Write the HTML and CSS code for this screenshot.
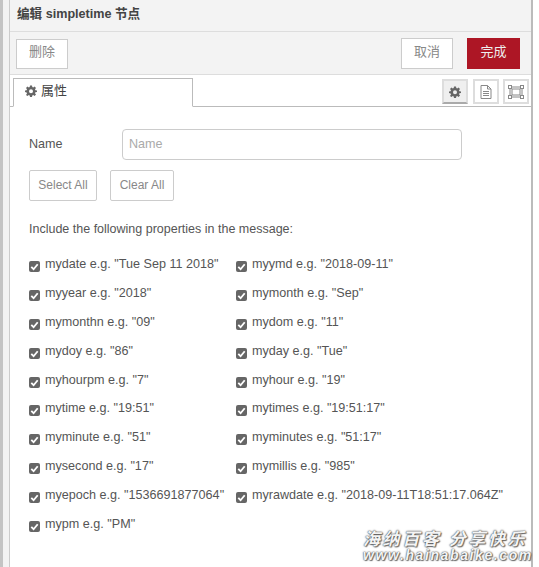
FILE: index.html
```html
<!DOCTYPE html>
<html lang="zh">
<head>
  <meta charset="UTF-8" />
  <title>编辑 simpletime 节点</title>
  <link rel="stylesheet" href="styles.css">
</head>
<body>
  <div class="side-strip"></div>
  <div class="tray">
    <div class="tray-title">编辑 simpletime 节点</div>

    <div class="tray-toolbar">
      <button class="btn btn-delete">删除</button>
      <div class="toolbar-right">
        <button class="btn btn-cancel">取消</button>
        <button class="btn btn-done">完成</button>
      </div>
    </div>

    <div class="tabs">
      <div class="tab">
        <svg class="icon-gear" viewBox="0 0 24 24"><path fill-rule="evenodd" d="M10 1h4l.6 3.2 1.800.8L19.100 3l2.900 2.900-2 2.700.8 1.800L24 11v3l-3.200.5-.8 1.800 2 2.800-2.900 2.900-2.700-2-1.800.8L14 24h-4l-.6-3.200-1.800-.8-2.700 2L2 19.800l2-2.800-.8-1.800L0 14v-3l3.200-.6.8-1.800-2-2.700L4.900 3l2.700 2 1.800-.8zM12 8.500a4 4 0 1 0 0 8 4 4 0 0 0 0-8z"/></svg>
        <span>属性</span>
      </div>
      <div class="tab-tools">
        <div class="tool tool-active">
          <svg class="icon-gear" viewBox="0 0 24 24"><path fill-rule="evenodd" d="M10 1h4l.6 3.2 1.800.8L19.100 3l2.900 2.900-2 2.700.8 1.800L24 11v3l-3.200.5-.8 1.800 2 2.800-2.900 2.900-2.700-2-1.800.8L14 24h-4l-.6-3.200-1.800-.8-2.700 2L2 19.800l2-2.800-.8-1.800L0 14v-3l3.200-.6.8-1.800-2-2.700L4.900 3l2.700 2 1.800-.8zM12 8.500a4 4 0 1 0 0 8 4 4 0 0 0 0-8z"/></svg>
        </div>
        <div class="tool">
          <svg class="icon-doc" viewBox="0 0 12 14"><path d="M1 .5h6.500L11 4v9.500H1z M7.500.5V4H11 M3 6.500h6 M3 8.500h6 M3 10.500h6"/></svg>
        </div>
        <div class="tool">
          <svg class="icon-frame" viewBox="0 0 16 14"><path d="M2 2h12v10H2z M4 4h8v6H4z"/><rect x="0.500" y="0.500" width="3" height="3"/><rect x="12.500" y="0.500" width="3" height="3"/><rect x="0.500" y="10.500" width="3" height="3"/><rect x="12.500" y="10.500" width="3" height="3"/></svg>
        </div>
      </div>
    </div>

    <div class="form">
      <div class="form-row">
        <label class="name-label">Name</label>
        <input class="name-input" type="text" placeholder="Name">
      </div>
      <div class="select-row">
        <button class="btn-plain btn-select">Select All</button>
        <button class="btn-plain btn-clear">Clear All</button>
      </div>
      <div class="include-text">Include the following properties in the message:</div>

      <div class="props" id="props"></div>
    </div>
  </div>

  <div class="watermark">
    <div class="wm-cn">海纳百客 分享快乐</div>
    <div class="wm-en">www.hainabaike.com</div>
  </div>

  <script>
    const props = [
      ['mydate e.g. "Tue Sep 11 2018"', 'myymd e.g. "2018-09-11"'],
      ['myyear e.g. "2018"', 'mymonth e.g. "Sep"'],
      ['mymonthn e.g. "09"', 'mydom e.g. "11"'],
      ['mydoy e.g. "86"', 'myday e.g. "Tue"'],
      ['myhourpm e.g. "7"', 'myhour e.g. "19"'],
      ['mytime e.g. "19:51"', 'mytimes e.g. "19:51:17"'],
      ['myminute e.g. "51"', 'myminutes e.g. "51:17"'],
      ['mysecond e.g. "17"', 'mymillis e.g. "985"'],
      ['myepoch e.g. "1536691877064"', 'myrawdate e.g. "2018-09-11T18:51:17.064Z"'],
      ['mypm e.g. "PM"']
    ];

    const box = document.getElementById("props");
    props.flat().forEach(text => {
      const item = document.createElement("label");
      item.className = "prop";
      item.innerHTML = '<span class="check"><svg viewBox="0 0 12 12"><path d="M2.500 6.500l2.500 2.500 4.500-5.500"/></svg></span>';
      const span = document.createElement("span");
      span.innerText = text;
      item.appendChild(span);
      box.appendChild(item);
    });
  </script>
</body>
</html>
```
FILE: styles.css
```css
* {
  box-sizing: border-box;
}

html, body {
  height: 100%;
}

body {
  margin: 0;
  display: flex;
  position: relative;
  overflow: hidden;
  background: #fff;
  font-family: "Liberation Sans", "Noto Sans CJK SC", sans-serif;
  font-size: 12.6px;
  color: #555;
}

.side-strip {
  width: 10px;
  flex: none;
  background: #f3f3f3;
  border-left: 3px solid #c4c4c4;
  border-right: 1px solid #ccc;
}

.tray {
  width: 523px;
  flex: none;
  border-right: 2px solid #bbb;
  display: flex;
  flex-direction: column;
}

.tray-title {
  height: 32px;
  padding: 6px 7px 0;
  background: #f3f3f3;
  border-bottom: 1px solid #ddd;
  font-size: 12.6px;
  line-height: 16px;
  font-weight: bold;
  color: #444;
}

.tray-toolbar {
  height: 43px;
  padding: 6px 11px 0 6px;
  background: #f3f3f3;
  border-bottom: 1px solid #ddd;
  display: flex;
  justify-content: space-between;
  align-items: flex-start;
}

.toolbar-right {
  display: flex;
  gap: 14px;
}

.btn {
  height: 31px;
  font-family: inherit;
  font-size: 13px;
  line-height: 16px;
  padding: 0 0 4px;
  background: #fff;
  border: 1px solid #ccc;
  color: #888;
}

.btn-delete {
  width: 52px;
  height: 30px;
  margin-top: 1px;
}

.btn-cancel {
  width: 52px;
}

.btn-done {
  width: 53px;
  background: #ad1625;
  border-color: #ad1625;
  color: #eee;
}

.tabs {
  height: 32px;
  padding: 3px 0 0 3px;
  border-bottom: 1px solid #bbb;
  display: flex;
  justify-content: space-between;
}

.tab {
  width: 180px;
  height: 29px;
  padding-left: 11px;
  padding-bottom: 3px;
  background: #fff;
  border: 1px solid #bbb;
  border-bottom: 1px solid #fff;
  display: flex;
  align-items: center;
  gap: 4px;
  font-size: 13px;
  line-height: 16px;
  color: #444;
}

.icon-gear {
  width: 12px;
  height: 12px;
  fill: #666;
}

.tab-tools {
  display: flex;
  gap: 4.5px;
  margin-top: 1px;
  padding-right: 2px;
}

.tool {
  width: 26px;
  height: 25px;
  border: 2px solid #ddd;
  background: #fff;
  display: flex;
  align-items: center;
  justify-content: center;
}

.tool-active {
  background: #efefef;
  border-color: #ddd;
  border-bottom-color: #aaa;
}

.icon-doc {
  width: 12px;
  height: 14px;
  fill: none;
  stroke: #888;
}

.icon-frame {
  width: 16px;
  height: 14px;
  fill: #fff;
  stroke: #888;
}

.form {
  padding: 22px 0 0 19px;
}

.form-row {
  display: flex;
  align-items: center;
}

.name-label {
  width: 93px;
  padding-bottom: 2px;
  color: #555;
}

.name-input {
  width: 340px;
  height: 31px;
  padding: 0 6px 2px;
  border: 1px solid #ccc;
  border-radius: 4px;
  font-family: inherit;
  font-size: 12.6px;
}

.name-input::placeholder {
  color: #aaa;
}

.select-row {
  display: flex;
  gap: 13px;
  margin-top: 10px;
}

.btn-plain {
  height: 31px;
  padding: 0 0 2px;
  background: #fff;
  border: 1px solid #ccc;
  border-radius: 2px;
  font-family: inherit;
  font-size: 12px;
  color: #888;
}

.btn-select {
  width: 68px;
}

.btn-clear {
  width: 64px;
}

.include-text {
  margin-top: 20px;
  font-size: 12.5px;
  line-height: 16px;
}

.props {
  display: grid;
  grid-template-columns: 207px 1fr;
  grid-auto-rows: 28.9px;
  margin-top: 19px;
}

.prop {
  display: flex;
  align-items: flex-start;
  gap: 5px;
  font-size: 12.6px;
  line-height: 16px;
  white-space: nowrap;
}

.check {
  width: 11px;
  height: 11px;
  margin-top: 5px;
  border-radius: 2px;
  background: #666;
  display: flex;
}

.check svg {
  fill: none;
  stroke: #fff;
  stroke-width: 2;
}

.watermark {
  position: absolute;
  right: 6px;
  bottom: 5px;
  width: 170px;
  font-style: italic;
  font-weight: bold;
  color: #f4f4f4;
  text-shadow: 0 0 2px #555, 0 0 1px #444, 1px 1px 1px #777;
}

.wm-cn {
  font-size: 17px;
  line-height: 16px;
  letter-spacing: 2.6px;
  white-space: nowrap;
}

.wm-en {
  font-size: 14px;
  line-height: 14px;
  letter-spacing: 1.6px;
  white-space: nowrap;
}
```
